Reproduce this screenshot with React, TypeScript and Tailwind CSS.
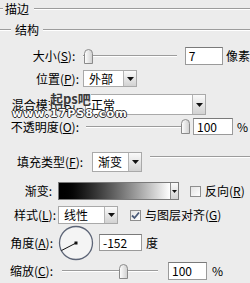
import React from 'react';

const Line = ({ className = '' }: { className?: string }) => (
  <div className={`h-0 border-t border-t-[#9c9c9c] border-b border-b-white ${className}`} />
);

const Arrow = () => (
  <div className="w-[13px] self-stretch flex items-center justify-center border-l border-[#b5b5b5] bg-gradient-to-b from-[#fafafa] to-[#d2d2d2]">
    <svg width="7" height="4" viewBox="0 0 7 4">
      <path d="M0 0 H7 L3.5 4 Z" fill="#111" />
    </svg>
  </div>
);

const Dropdown = ({ text, className }: { text: string; className: string }) => (
  <div className={`flex items-stretch border border-[#a9a9a9] bg-white ${className}`}>
    <div className="flex-1 flex items-center pl-[5px] leading-none">{text}</div>
    <Arrow />
  </div>
);

const Thumb = () => (
  <svg width="9" height="15" viewBox="0 0 9 15">
    <defs>
      <linearGradient id="tg" x1="0" y1="0" x2="1" y2="0">
        <stop offset="0" stopColor="#ffffff" />
        <stop offset="1" stopColor="#cfcfcf" />
      </linearGradient>
    </defs>
    <path d="M0.5 4.5 Q0.5 0.5 4.5 0.5 Q8.5 0.5 8.5 4.5 V14.5 H0.5 Z" fill="url(#tg)" stroke="#8a8a8a" />
  </svg>
);

const Slider = ({ pos, className }: { pos: number; className: string }) => (
  <div className={`relative h-[15px] flex items-center ${className}`}>
    <Line className="w-full" />
    <div className="absolute top-0" style={{ left: pos }}>
      <Thumb />
    </div>
  </div>
);

const Input = ({ value, className }: { value: string; className: string }) => (
  <div className={`flex items-center bg-white border border-[#9a9a9a] border-t-[#7a7a7a] pl-[3px] leading-none ${className}`}>
    {value}
  </div>
);

const Checkbox = ({ checked }: { checked?: boolean }) => (
  <div className="w-[11px] h-[11px] border border-[#8e8e8e] bg-gradient-to-br from-[#e4e4e4] to-white flex items-center justify-center">
    {checked && (
      <svg width="9" height="9" viewBox="0 0 9 9">
        <path d="M1 4.5 L3.5 7 L8 1.5" fill="none" stroke="#4a5a78" strokeWidth="1.8" />
      </svg>
    )}
  </div>
);

export default function App() {
  return (
    <div className="relative w-[250px] h-[283px] overflow-hidden bg-[#ececec] text-[12px] text-black font-['Noto_Sans_CJK_SC',sans-serif] leading-none select-none">
      {/* 描边 */}
      <div className="flex items-center h-[18px]">
        <Line className="w-[3px]" />
        <span className="ml-[2px]">描边</span>
        <Line className="flex-1 ml-[5px]" />
      </div>
      {/* 结构 */}
      <div className="flex items-center h-[20px] mt-[2px]">
        <Line className="w-[11px]" />
        <span className="mx-[4px]">结构</span>
        <Line className="flex-1" />
      </div>

      <div className="flex items-center h-[18px] mt-[7px]">
        <div className="w-[79px] text-right">大小(<u>S</u>):</div>
        <Slider pos={1} className="w-[98px] ml-[8px]" />
        <Input value="7" className="w-[40px] h-[18px] ml-[8px]" />
        <span className="ml-[3px] whitespace-nowrap">像素</span>
      </div>

      <div className="flex items-center h-[17px] mt-[5px]">
        <div className="w-[79px] text-right">位置(<u>P</u>):</div>
        <Dropdown text="外部" className="w-[54px] h-[17px] ml-[4px]" />
      </div>

      <div className="flex items-center h-[21px] mt-[7px]">
        <div className="w-[79px] text-right whitespace-nowrap">混合模式(<u>B</u>):</div>
        <Dropdown text="正常" className="w-[121px] h-[21px] ml-[6px]" />
      </div>

      <div className="flex items-center h-[17px] mt-[3px]">
        <div className="w-[79px] text-right whitespace-nowrap">不透明度(<u>O</u>):</div>
        <Slider pos={95} className="w-[104px] ml-[7px]" />
        <Input value="100" className="w-[40px] h-[17px] ml-[3px]" />
        <span className="ml-[4px]">%</span>
      </div>

      {/* 填充类型 */}
      <div className="flex items-center h-[20px] mt-[17px]">
        <div className="ml-[17px] w-[73px] whitespace-nowrap">填充类型(<u>F</u>):</div>
        <Dropdown text="渐变" className="w-[50px] h-[20px] ml-[2px]" />
        <Line className="flex-1 ml-[8px] -mt-[10px]" />
      </div>

      <div className="flex items-center h-[18px] mt-[10px]">
        <div className="w-[52px] text-right">渐变:</div>
        <div className="flex items-stretch h-[18px] ml-[6px] border border-[#7a7a7a]">
          <div className="w-[111px] bg-gradient-to-r from-black to-white" />
          <div className="w-[8px] flex items-center justify-center bg-gradient-to-b from-[#fafafa] to-[#d2d2d2] border-l border-[#8a8a8a]">
            <svg width="5" height="3" viewBox="0 0 5 3">
              <path d="M0 0 H5 L2.5 3 Z" fill="#111" />
            </svg>
          </div>
        </div>
        <div className="ml-[11px]"><Checkbox /></div>
        <span className="ml-[4px] whitespace-nowrap">反向(<u>R</u>)</span>
      </div>

      <div className="flex items-center h-[18px] mt-[6px]">
        <div className="w-[56px] text-right">样式(<u>L</u>):</div>
        <Dropdown text="线性" className="w-[60px] h-[18px] ml-[2px]" />
        <div className="ml-[12px]"><Checkbox checked /></div>
        <span className="ml-[4px] whitespace-nowrap">与图层对齐(<u>G</u>)</span>
      </div>

      <div className="flex items-center h-[35px] mt-[1px]">
        <div className="w-[53px] text-right">角度(<u>A</u>):</div>
        <svg width="36" height="36" viewBox="0 0 36 36" className="ml-[5px]">
          <circle cx="18" cy="18" r="16.5" fill="#f4f4f4" stroke="#5d6577" strokeWidth="1.3" />
          <line x1="18" y1="18" x2="3.5" y2="25.5" stroke="#111" strokeWidth="1" />
          <rect x="16.5" y="16.5" width="3" height="3" fill="#111" />
        </svg>
        <Input value="-152" className="w-[43px] h-[17px] ml-[5px]" />
        <span className="ml-[4px]">度</span>
      </div>

      <div className="flex items-center h-[18px] mt-[2px]">
        <div className="w-[53px] text-right">缩放(<u>C</u>):</div>
        <Slider pos={57} className="w-[96px] ml-[9px]" />
        <Input value="100" className="w-[39px] h-[18px] ml-[10px]" />
        <span className="ml-[5px]">%</span>
      </div>

      {/* watermark */}
      <div className="absolute left-[50px] top-[92px] bg-[#ececec] text-[13px] font-bold text-[#3a3a3a] font-['Noto_Sans_CJK_SC',sans-serif] leading-none">
        起ps吧
      </div>
      <div className="absolute left-[12px] top-[108px] text-[11px] font-bold text-white tracking-[1px] font-['DejaVu_Sans',sans-serif] leading-none [text-shadow:1px_0_#333,-1px_0_#333,0_1px_#333,0_-1px_#333]">
        www.17PS8.com
      </div>
    </div>
  );
}
